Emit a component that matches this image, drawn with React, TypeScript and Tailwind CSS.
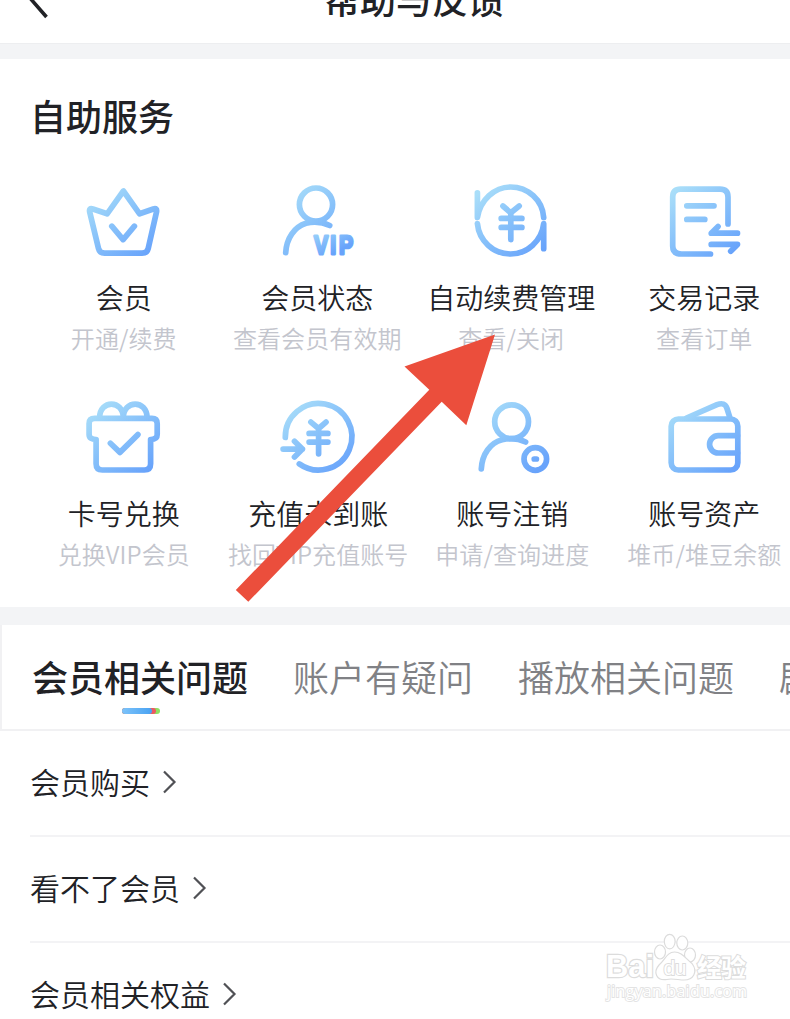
import type { ReactNode } from "react";

function Icon({ id, dx = 0, children }: { id: string; dx?: number; children: ReactNode }) {
  return (
    <svg
      className="h-20 w-20 shrink-0 overflow-visible"
      viewBox={`${-dx} 0 80 80`}
      fill="none"
      stroke={`url(#${id})`}
      strokeWidth="5.7"
      strokeLinecap="round"
      strokeLinejoin="round"
    >
      <defs>
        <linearGradient id={id} gradientUnits="userSpaceOnUse" x1="12" y1="8" x2="66" y2="74">
          <stop offset="0" stopColor="#a9def9" />
          <stop offset="0.5" stopColor="#86c0fa" />
          <stop offset="1" stopColor="#68a3fb" />
        </linearGradient>
      </defs>
      {children}
    </svg>
  );
}

const crown = (
  <Icon id="crown" dx={-0.9}>
    <path d="M40.3 10 24 32.8 9.8 28Q5.6 26.7 6.6 31L15.4 67.5Q16.6 72.2 21.5 72.2H59Q64 72.2 65.1 67.5L73.4 31Q74.3 26.7 70.2 28L56.5 32.8Z" />
    <path d="M28.7 45.2 40 58.6 51.3 45.2" />
  </Icon>
);

const vipUser = (
  <Icon id="vip">
    <defs>
      <linearGradient id="vipText" gradientUnits="userSpaceOnUse" x1="52" y1="52" x2="62" y2="76">
        <stop offset="0" stopColor="#96cefa" />
        <stop offset="1" stopColor="#68a3fb" />
      </linearGradient>
    </defs>
    <circle cx="39" cy="23.6" r="16.6" />
    <path d="M8.7 71.7C9.5 57 17.5 45.8 29 42.2Q41.5 39.3 52.7 44.5" />
    <text
      transform="scale(0.8 1)"
      x="46.2 66.6 77.6"
      y="72.8"
      fontFamily="Liberation Sans, sans-serif"
      fontSize="26.5"
      fontWeight="700"
      fill="url(#vipText)"
      stroke="url(#vipText)"
      strokeWidth="2.8"
    >
      VIP
    </text>
  </Icon>
);

const renew = (
  <Icon id="renew">
    <path d="M6.4 11.8V36.5C9.2 19 23.5 6 39.6 6 57 6 71.5 19 72.7 36.5" />
    <path d="M6.4 42.5C8 60 22.5 73 39.6 73 56 73 70.8 60 72.7 42.5V67.7" />
    <path d="M31.9 25 39.8 31.8 48.2 25M39.8 32V58.6M30.2 37.4H50.9M30.2 46.4H50.9" />
  </Icon>
);

const record = (
  <Icon id="record">
    <path d="M64 43V16Q64 8.2 56 8.2H16.7Q8.7 8.2 8.7 16V65Q8.7 73 17.5 73H46.5" />
    <path d="M22.8 24.8H50M22.8 38.4H40.8" />
    <path d="M73.5 52.2H47.2L54 45.6M47.2 63.4H73.5L66.7 70.3" />
  </Icon>
);

const gift = (
  <Icon id="gift" dx={-0.9}>
    <path d="M16.5 20.8C16.5 2.5 40.2 2.5 40.2 20.8 40.2 2.5 64 2.5 64 20.8" />
    <path d="M11.5 21.4H68.8Q74.1 21.4 74.1 26.6V37.5Q74.1 42.5 67.5 42.5V66.8Q67.5 73 61.2 73H19.2Q13 73 13 66.8V42.5Q6 42.5 6 37.5V26.6Q6 21.4 11.5 21.4Z" />
    <path d="M27.3 46.2 36.8 55.4 54.8 37.6" />
  </Icon>
);

const recharge = (
  <Icon id="recharge" dx={-1.1}>
    <path d="M8.4 40.5A33.3 33.3 0 1 1 22.4 66.9" />
    <path d="M6.2 52.1H25.5M17.6 44.2 25.5 52.1 17.6 60" />
    <path d="M34 25.1 41.7 31.5 49.1 25.1M41.7 31.5V56.8M32.2 36.4H51M32.2 45.1H51" />
  </Icon>
);

const cancel = (
  <Icon id="cancel" dx={-1.4}>
    <circle cx="41" cy="24.8" r="16.9" />
    <path d="M10.7 71.9C11.5 57 19.5 46 31.5 42.8Q44 39.8 55 45" />
    <circle cx="64.7" cy="62" r="11.3" />
    <path d="M63.6 62H65.8" />
  </Icon>
);

const wallet = (
  <Icon id="wallet">
    <path d="M22.5 21 53 7.7Q60.8 4.7 63 11.5L66 21" />
    <rect x="7.2" y="22" width="66.6" height="51" rx="7.2" />
    <path d="M73.5 38.7H54.2A8.6 8.6 0 0 0 54.2 56H73.5" />
  </Icon>
);

const services = [
  { icon: crown, title: "会员", note: "开通/续费", inset: "" },
  { icon: vipUser, title: "会员状态", note: "查看会员有效期", inset: "" },
  { icon: renew, title: "自动续费管理", note: "查看/关闭", inset: "pl-px" },
  { icon: record, title: "交易记录", note: "查看订单", inset: "" },
  { icon: gift, title: "卡号兑换", note: "兑换VIP会员", inset: "" },
  { icon: recharge, title: "充值未到账", note: "找回VIP充值账号", inset: "pl-[2px]" },
  { icon: cancel, title: "账号注销", note: "申请/查询进度", inset: "pl-[3px]" },
  { icon: wallet, title: "账号资产", note: "堆币/堆豆余额", inset: "" },
];

const tabs = ["账户有疑问", "播放相关问题", "剧集"];
const questions = ["会员购买", "看不了会员", "会员相关权益"];

function Watermark() {
  return (
    <svg
      className="pointer-events-none absolute left-[600px] top-[930px] h-[76px] w-[152px]"
      viewBox="0 0 152 76"
      fill="#ffffff"
      stroke="#dcdcdc"
      strokeWidth="1.2"
    >
      <g fontFamily="Liberation Sans, Noto Sans CJK SC, sans-serif" fontWeight="700">
        <text x="6" y="47" fontSize="31" textLength="48" lengthAdjust="spacingAndGlyphs" strokeWidth="2.4" paintOrder="stroke">Bai</text>
        <ellipse cx="60" cy="22" rx="5.5" ry="7" />
        <ellipse cx="69.7" cy="11.6" rx="5.4" ry="7.3" />
        <ellipse cx="82.3" cy="13" rx="5.5" ry="7" />
        <ellipse cx="90" cy="25" rx="5.5" ry="7" />
        <path d="M74.5 22C82 22 85 28 92 33.5C98.5 42 93 50 84 50C79 50 71 48 67 49.5C56 51 53 42 59 35C65 30 67 22 74.5 22Z" />
        <text x="63.5" y="45" fontSize="21" fontWeight="400" textLength="23" strokeWidth="1.8" paintOrder="stroke">du</text>
        <text x="97" y="46.5" fontSize="25" textLength="49" strokeWidth="2" paintOrder="stroke">经验</text>
      </g>
      <text
        x="7"
        y="67"
        fontFamily="Open Sans, sans-serif"
        fontSize="16"
        stroke="#e3e3e3"
        strokeWidth="1.8"
        paintOrder="stroke"
        textLength="140"
      >
        jingyan.baidu.com
      </text>
    </svg>
  );
}

export default function App() {
  return (
    <div className="relative flex h-[1019px] w-[790px] flex-col overflow-hidden bg-white font-['Noto_Sans_CJK_SC',sans-serif] text-[#212226]">
      <header className="relative h-[43px] shrink-0">
        <svg className="absolute left-0 top-0 h-10 w-14" viewBox="0 0 56 40" fill="none" stroke="#212226" strokeWidth="3.6">
          <path d="M46 -39 23 -10 46.5 17" />
        </svg>
        <h1 className="absolute left-[324px] top-[-28px] whitespace-nowrap text-[36px] font-medium leading-[52px]">帮助与反馈</h1>
      </header>
      <div className="h-4 shrink-0 border-t border-[#edeef0] bg-[#f3f4f6]" />

      <section className="h-[548px] shrink-0">
        <h2 className="h-[122px] pl-[30px] pt-[30px] text-[36px] font-medium leading-[52px]">自助服务</h2>
        <div className="ml-[27px] grid w-[774px] grid-cols-4">
          {services.map((s) => (
            <div key={s.title} className={`flex h-[216px] flex-col items-center whitespace-nowrap ${s.inset}`}>
              {s.icon}
              <span className="mt-[16px] text-[28px] font-[350] leading-10">{s.title}</span>
              <span className="mt-[4px] text-[24px] font-[350] leading-[34px] tracking-[0.1px] text-[#c3c5cd]">{s.note}</span>
            </div>
          ))}
        </div>
      </section>

      <div className="h-[18px] shrink-0 bg-[#f3f4f6]" />
      <nav className="flex h-[106px] shrink-0 gap-[45px] whitespace-nowrap border-b-2 border-l-2 border-[#f1f1f3] pl-[30px] pt-[25px] text-[36px] leading-[52px]">
        <div className="flex flex-col items-center">
          <span className="font-medium">会员相关问题</span>
          <span className="ml-[2px] mt-[6px] flex h-[6px] w-[38px] rounded-full bg-[#8fe063]">
            <span className="flex h-full w-[34px] rounded-full bg-[#ee5861]">
              <span className="h-full w-[30px] rounded-full bg-gradient-to-r from-[#7cc3fa] to-[#48a2f2]" />
            </span>
          </span>
        </div>
        {tabs.map((t) => (
          <span key={t} className="font-[350] text-[#808185]">{t}</span>
        ))}
      </nav>

      <ul className="shrink-0">
        {questions.map((q) => (
          <li key={q} className="ml-[30px] flex h-[106px] items-center border-b-2 border-[#f3f3f5] text-[30px] font-[350] leading-10">
            <span className="pb-1">{q}</span>
            <svg className="mb-[2px] ml-3 h-6 w-4" viewBox="0 0 16 24" fill="none" stroke="#505155" strokeWidth="2.2">
              <path d="M2 1.5 12.5 12 2 22.5" />
            </svg>
          </li>
        ))}
      </ul>

      <Watermark />
      <svg className="pointer-events-none absolute left-[230px] top-[330px] h-[280px] w-[270px]" viewBox="230 330 270 280" fill="#eb4e3c">
        <path d="M495 334.5 466.3 425.3 441.7 401.7 248.3 601.8 235.8 590 429.3 389.7 404.5 366.5Z" />
      </svg>
    </div>
  );
}
